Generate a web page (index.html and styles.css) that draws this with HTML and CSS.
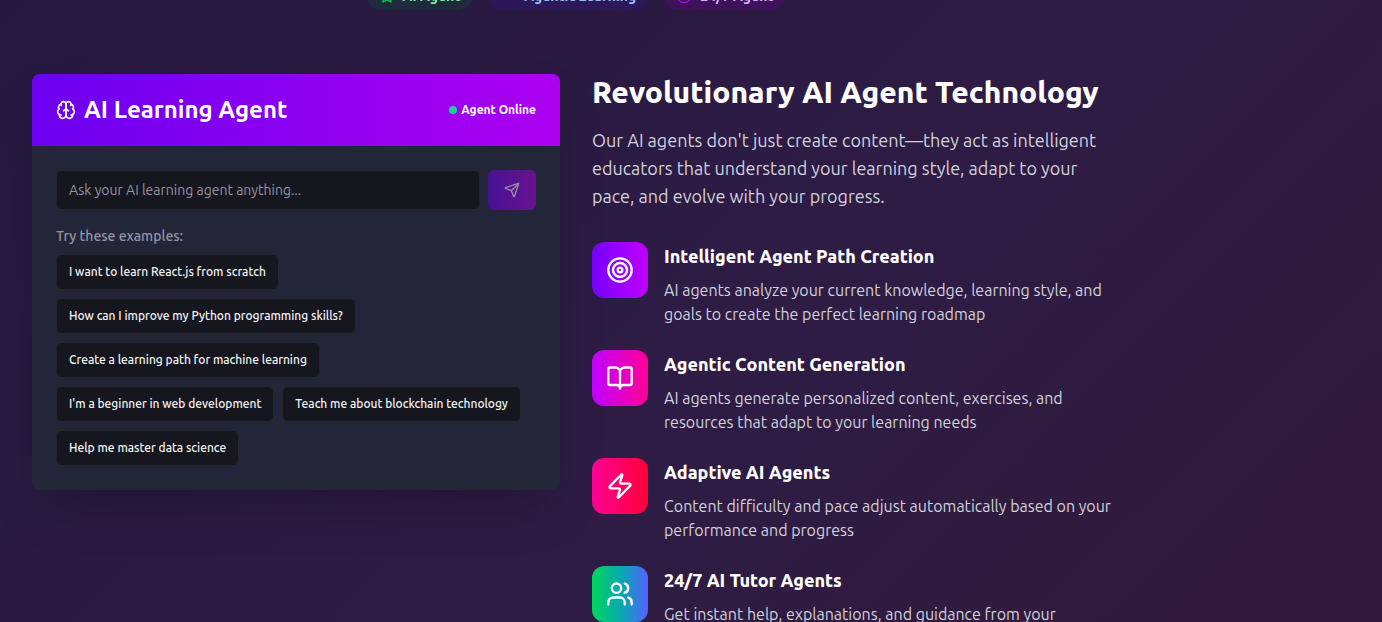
FILE: index.html
```html
<!DOCTYPE html>
<html lang="en">
<head>
  <meta charset="UTF-8">
  <meta name="viewport" content="width=device-width, initial-scale=1.0">
  <title>AI Learning Agent</title>
  <link rel="stylesheet" href="styles.css">
</head>
<body>
  <main class="container">
    <div class="badges">
      <span class="badge badge-green">
        <svg class="icon" viewBox="0 0 24 24"><path d="M12 2l3.09 6.26L22 9.27l-5 4.87 1.18 6.88L12 17.77l-6.18 3.25L7 14.14 2 9.27l6.91-1.01z"/></svg>
        AI Agent
      </span>
      <span class="badge badge-blue">
        <svg class="icon" viewBox="0 0 24 24"><path d="M22 7l-8.500 8.500-5-5L2 17"/><path d="M16 7h6v6"/></svg>
        Agentic Learning
      </span>
      <span class="badge badge-purple">
        <svg class="icon" viewBox="0 0 24 24"><circle cx="12" cy="12" r="10"/></svg>
        24/7 Agent
      </span>
    </div>

    <div class="columns">
      <section class="card">
        <header class="card-header">
          <h3 class="card-title">
            <svg class="icon" viewBox="0 0 24 24">
              <path d="M12 5a3 3 0 1 0-5.997.125 4 4 0 0 0-2.526 5.77 4 4 0 0 0 .556 6.588A4 4 0 1 0 12 18Z"/>
              <path d="M12 5a3 3 0 1 1 5.997.125 4 4 0 0 1 2.526 5.77 4 4 0 0 1-.556 6.588A4 4 0 1 1 12 18Z"/>
              <path d="M15 13a4.5 4.5 0 0 1-3-4 4.5 4.5 0 0 1-3 4"/>
              <path d="M17.599 6.5a3 3 0 0 0 .399-1.375M6.003 5.125A3 3 0 0 0 6.401 6.5M3.477 10.896a4 4 0 0 1 .585-.396M19.938 10.5a4 4 0 0 1 .585.396M6 18a4 4 0 0 1-1.967-.516M19.967 17.484A4 4 0 0 1 18 18"/>
            </svg>
            AI Learning Agent
          </h3>
          <span class="status"><span class="dot"></span>Agent Online</span>
        </header>
        <div class="card-body">
          <form class="ask">
            <input class="ask-input" type="text" placeholder="Ask your AI learning agent anything..." aria-label="Ask your AI learning agent anything">
            <button class="send" type="submit" aria-label="Send" disabled>
              <svg class="icon" viewBox="0 0 24 24"><path d="M14.536 21.686a.5.5 0 0 0 .937-.024l6.5-19a.496.496 0 0 0-.635-.635l-19 6.5a.5.5 0 0 0-.024.937l7.93 3.18a2 2 0 0 1 1.112 1.11z"/><path d="m21.854 2.147-10.94 10.939"/></svg>
            </button>
          </form>
          <p class="examples-label">Try these examples:</p>
          <div class="examples">
            <button class="example" type="button">I want to learn React.js from scratch</button>
            <button class="example" type="button">How can I improve my Python programming skills?</button>
            <button class="example" type="button">Create a learning path for machine learning</button>
            <button class="example" type="button">I'm a beginner in web development</button>
            <button class="example" type="button">Teach me about blockchain technology</button>
            <button class="example" type="button">Help me master data science</button>
          </div>
        </div>
      </section>

      <section class="about">
        <h2 class="about-title">Revolutionary AI Agent Technology</h2>
        <p class="about-text">Our AI agents don't just create content—they act as intelligent educators that understand your learning style, adapt to your pace, and evolve with your progress.</p>
        <div class="features">
          <div class="feature">
            <div class="feature-icon violet">
              <svg class="icon" viewBox="0 0 24 24"><circle cx="12" cy="12" r="10"/><circle cx="12" cy="12" r="6"/><circle cx="12" cy="12" r="2"/></svg>
            </div>
            <div>
              <h4 class="feature-title">Intelligent Agent Path Creation</h4>
              <p class="feature-text">AI agents analyze your current knowledge, learning style, and goals to create the perfect learning roadmap</p>
            </div>
          </div>
          <div class="feature">
            <div class="feature-icon pink">
              <svg class="icon" viewBox="0 0 24 24"><path d="M12 7v14"/><path d="M3 18a1 1 0 0 1-1-1V4a1 1 0 0 1 1-1h5a4 4 0 0 1 4 4 4 4 0 0 1 4-4h5a1 1 0 0 1 1 1v13a1 1 0 0 1-1 1h-6a3 3 0 0 0-3 3 3 3 0 0 0-3-3z"/></svg>
            </div>
            <div>
              <h4 class="feature-title">Agentic Content Generation</h4>
              <p class="feature-text">AI agents generate personalized content, exercises, and resources that adapt to your learning needs</p>
            </div>
          </div>
          <div class="feature">
            <div class="feature-icon red">
              <svg class="icon" viewBox="0 0 24 24"><path d="M4 14a1 1 0 0 1-.78-1.63l9.9-10.2a.5.5 0 0 1 .86.46l-1.92 6.02A1 1 0 0 0 13 10h7a1 1 0 0 1 .78 1.63l-9.9 10.2a.5.5 0 0 1-.86-.46l1.92-6.02A1 1 0 0 0 11 14z"/></svg>
            </div>
            <div>
              <h4 class="feature-title">Adaptive AI Agents</h4>
              <p class="feature-text">Content difficulty and pace adjust automatically based on your performance and progress</p>
            </div>
          </div>
          <div class="feature">
            <div class="feature-icon green">
              <svg class="icon" viewBox="0 0 24 24"><path d="M16 21v-2a4 4 0 0 0-4-4H6a4 4 0 0 0-4 4v2"/><circle cx="9" cy="7" r="4"/><path d="M22 21v-2a4 4 0 0 0-3-3.87"/><path d="M16 3.13a4 4 0 0 1 0 7.75"/></svg>
            </div>
            <div>
              <h4 class="feature-title">24/7 AI Tutor Agents</h4>
              <p class="feature-text">Get instant help, explanations, and guidance from your</p>
            </div>
          </div>
        </div>
      </section>
    </div>
  </main>
</body>
</html>
```
FILE: styles.css
```css
* {
  box-sizing: border-box;
  margin: 0;
}

body {
  height: 100vh;
  overflow: hidden;
  font-family: Ubuntu, "Open Sans", "Noto Sans", sans-serif;
  color: #fff;
  background: linear-gradient(135deg, #25183f, #2e1c45 55%, #321a3a);
}

.container {
  max-width: 1152px;
  padding: 0 32px;
}

.icon {
  width: 16px;
  height: 16px;
  flex-shrink: 0;
  fill: none;
  stroke: currentColor;
  stroke-width: 2;
  stroke-linecap: round;
  stroke-linejoin: round;
}

/* the badge row is scrolled almost out of view */
.badges {
  display: flex;
  justify-content: center;
  align-items: flex-end;
  gap: 16px;
  height: 10px;
  margin-bottom: 64px;
}

.badge {
  display: flex;
  align-items: center;
  gap: 8px;
  padding: 4px 12px;
  border-radius: 14px;
  font-size: 14px;
  line-height: 20px;
  font-weight: 600;
}

.badge-green {
  background: #1f2b3c;
  color: #7bf1a8;
}

.badge-green .icon {
  color: #00c950;
}

.badge-blue {
  background: #2c1859;
  color: #8ec5ff;
}

.badge-blue .icon {
  color: #4f39f6;
}

.badge-purple {
  background: #3e1259;
  color: #dab2ff;
}

.badge-purple .icon {
  color: #ad00ff;
}

.columns {
  display: grid;
  grid-template-columns: 1fr 1fr;
  gap: 32px;
  align-items: start;
}

.card {
  border-radius: 8px;
  background: #222638;
  box-shadow: 0 24px 48px -12px rgba(0, 0, 0, 0.25);
  overflow: hidden;
}

.card-header {
  display: flex;
  justify-content: space-between;
  align-items: center;
  padding: 20px 24px;
  background: linear-gradient(90deg, #6c00f0, #ad00f0);
}

.card-title {
  display: flex;
  align-items: center;
  gap: 8px;
  font-size: 24px;
  line-height: 32px;
  font-weight: 700;
}

.card-title .icon {
  width: 20px;
  height: 20px;
}

.status {
  display: flex;
  align-items: center;
  gap: 4px;
  font-size: 12px;
  line-height: 16px;
  font-weight: 600;
}

.dot {
  width: 8px;
  height: 8px;
  border-radius: 50%;
  background: #1bd295;
}

.card-body {
  padding: 24px;
}

.ask {
  display: flex;
  gap: 8px;
}

.ask-input {
  flex: 1;
  min-width: 0;
  height: 40px;
  padding: 0 12px;
  border: 1px solid #27272a;
  border-radius: 6px;
  background: #16161e;
  color: #fff;
  font: inherit;
  font-size: 14px;
}

.ask-input::placeholder {
  color: #9494a4;
}

.send {
  display: flex;
  align-items: center;
  justify-content: center;
  width: 48px;
  height: 40px;
  border: none;
  border-radius: 6px;
  background: linear-gradient(90deg, #471193, #67138f);
  color: #9890a4;
}

.examples-label {
  margin: 16px 0 8px;
  font-size: 14px;
  line-height: 20px;
  font-weight: 500;
  color: #9494a4;
}

.examples {
  display: flex;
  flex-wrap: wrap;
  gap: 8px;
}

.example {
  height: 36px;
  padding: 0 12px;
  border: 1px solid #27272a;
  border-radius: 6px;
  background: #16161e;
  color: #f4f4f5;
  font: inherit;
  font-size: 12px;
  line-height: 16px;
  font-weight: 500;
  cursor: pointer;
}

.about-title {
  margin-bottom: 16px;
  font-size: 30px;
  line-height: 36px;
  font-weight: 800;
}

.about-text {
  margin-bottom: 32px;
  font-size: 18px;
  line-height: 28px;
  color: #d1d1db;
}

.features {
  display: grid;
  gap: 24px;
}

.feature {
  display: flex;
  gap: 16px;
}

.feature-icon {
  display: flex;
  align-items: center;
  justify-content: center;
  flex-shrink: 0;
  width: 56px;
  height: 56px;
  border-radius: 12px;
}

.feature-icon .icon {
  width: 28px;
  height: 28px;
}

.violet {
  background: linear-gradient(90deg, #7500ff, #bf00ff);
}

.pink {
  background: linear-gradient(90deg, #bf00ff, #ff0095);
}

.red {
  background: linear-gradient(90deg, #ff0095, #ff0038);
}

.green {
  background: linear-gradient(90deg, #00d65b, #0aa5b5 55%, #5560ff);
}

.feature-title {
  margin-bottom: 8px;
  font-size: 18px;
  line-height: 28px;
  font-weight: 800;
}

.feature-text {
  font-size: 16px;
  line-height: 24px;
  color: #d1d1db;
}
```
